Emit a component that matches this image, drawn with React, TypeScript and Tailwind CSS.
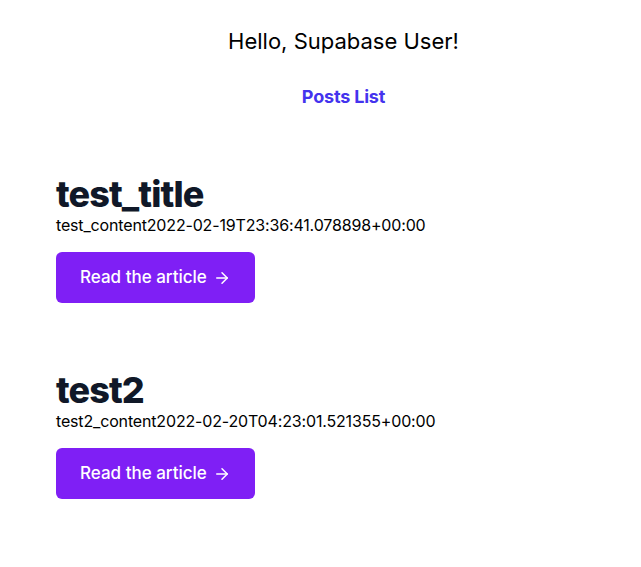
import { ArrowRight } from "lucide-react";

const posts = [
    { id: 1, title: "test_title", content: "test_content", createdAt: "2022-02-19T23:36:41.078898+00:00" },
    { id: 2, title: "test2", content: "test2_content", createdAt: "2022-02-20T04:23:01.521355+00:00" },
];

export default function App() {
    return (
        <div className="min-h-screen bg-white text-black font-['Inter',sans-serif]">
            <div className="pl-[46px] pt-[26px] text-center">
                <p className="text-[22px] leading-[30px]">Hello, Supabase User!</p>
                <a href="#" className="mt-[27px] inline-block text-lg font-bold leading-7 tracking-[-0.01em] text-[#4433ee]">Posts List</a>
            </div>
            <div className="px-14 pt-[63px] space-y-[67px]">
                {posts.map((post) => (
                    <div key={post.id}>
                        <h2 className="text-4xl font-extrabold leading-10 tracking-tight text-gray-900">{post.title}</h2>
                        <p className="text-base leading-6 tracking-[-0.01em] mt-[-1px]">
                            {post.content}
                            {post.createdAt}
                        </p>
                        <a href="#" className="mt-[15px] inline-flex items-center gap-1.5 rounded-md bg-[#7f1ff5] px-6 py-3 text-[17px] leading-[27px] font-medium text-white">
                            Read the article
                            <ArrowRight size={18} strokeWidth={2} />
                        </a>
                    </div>
                ))}
            </div>
        </div>
    );
}
